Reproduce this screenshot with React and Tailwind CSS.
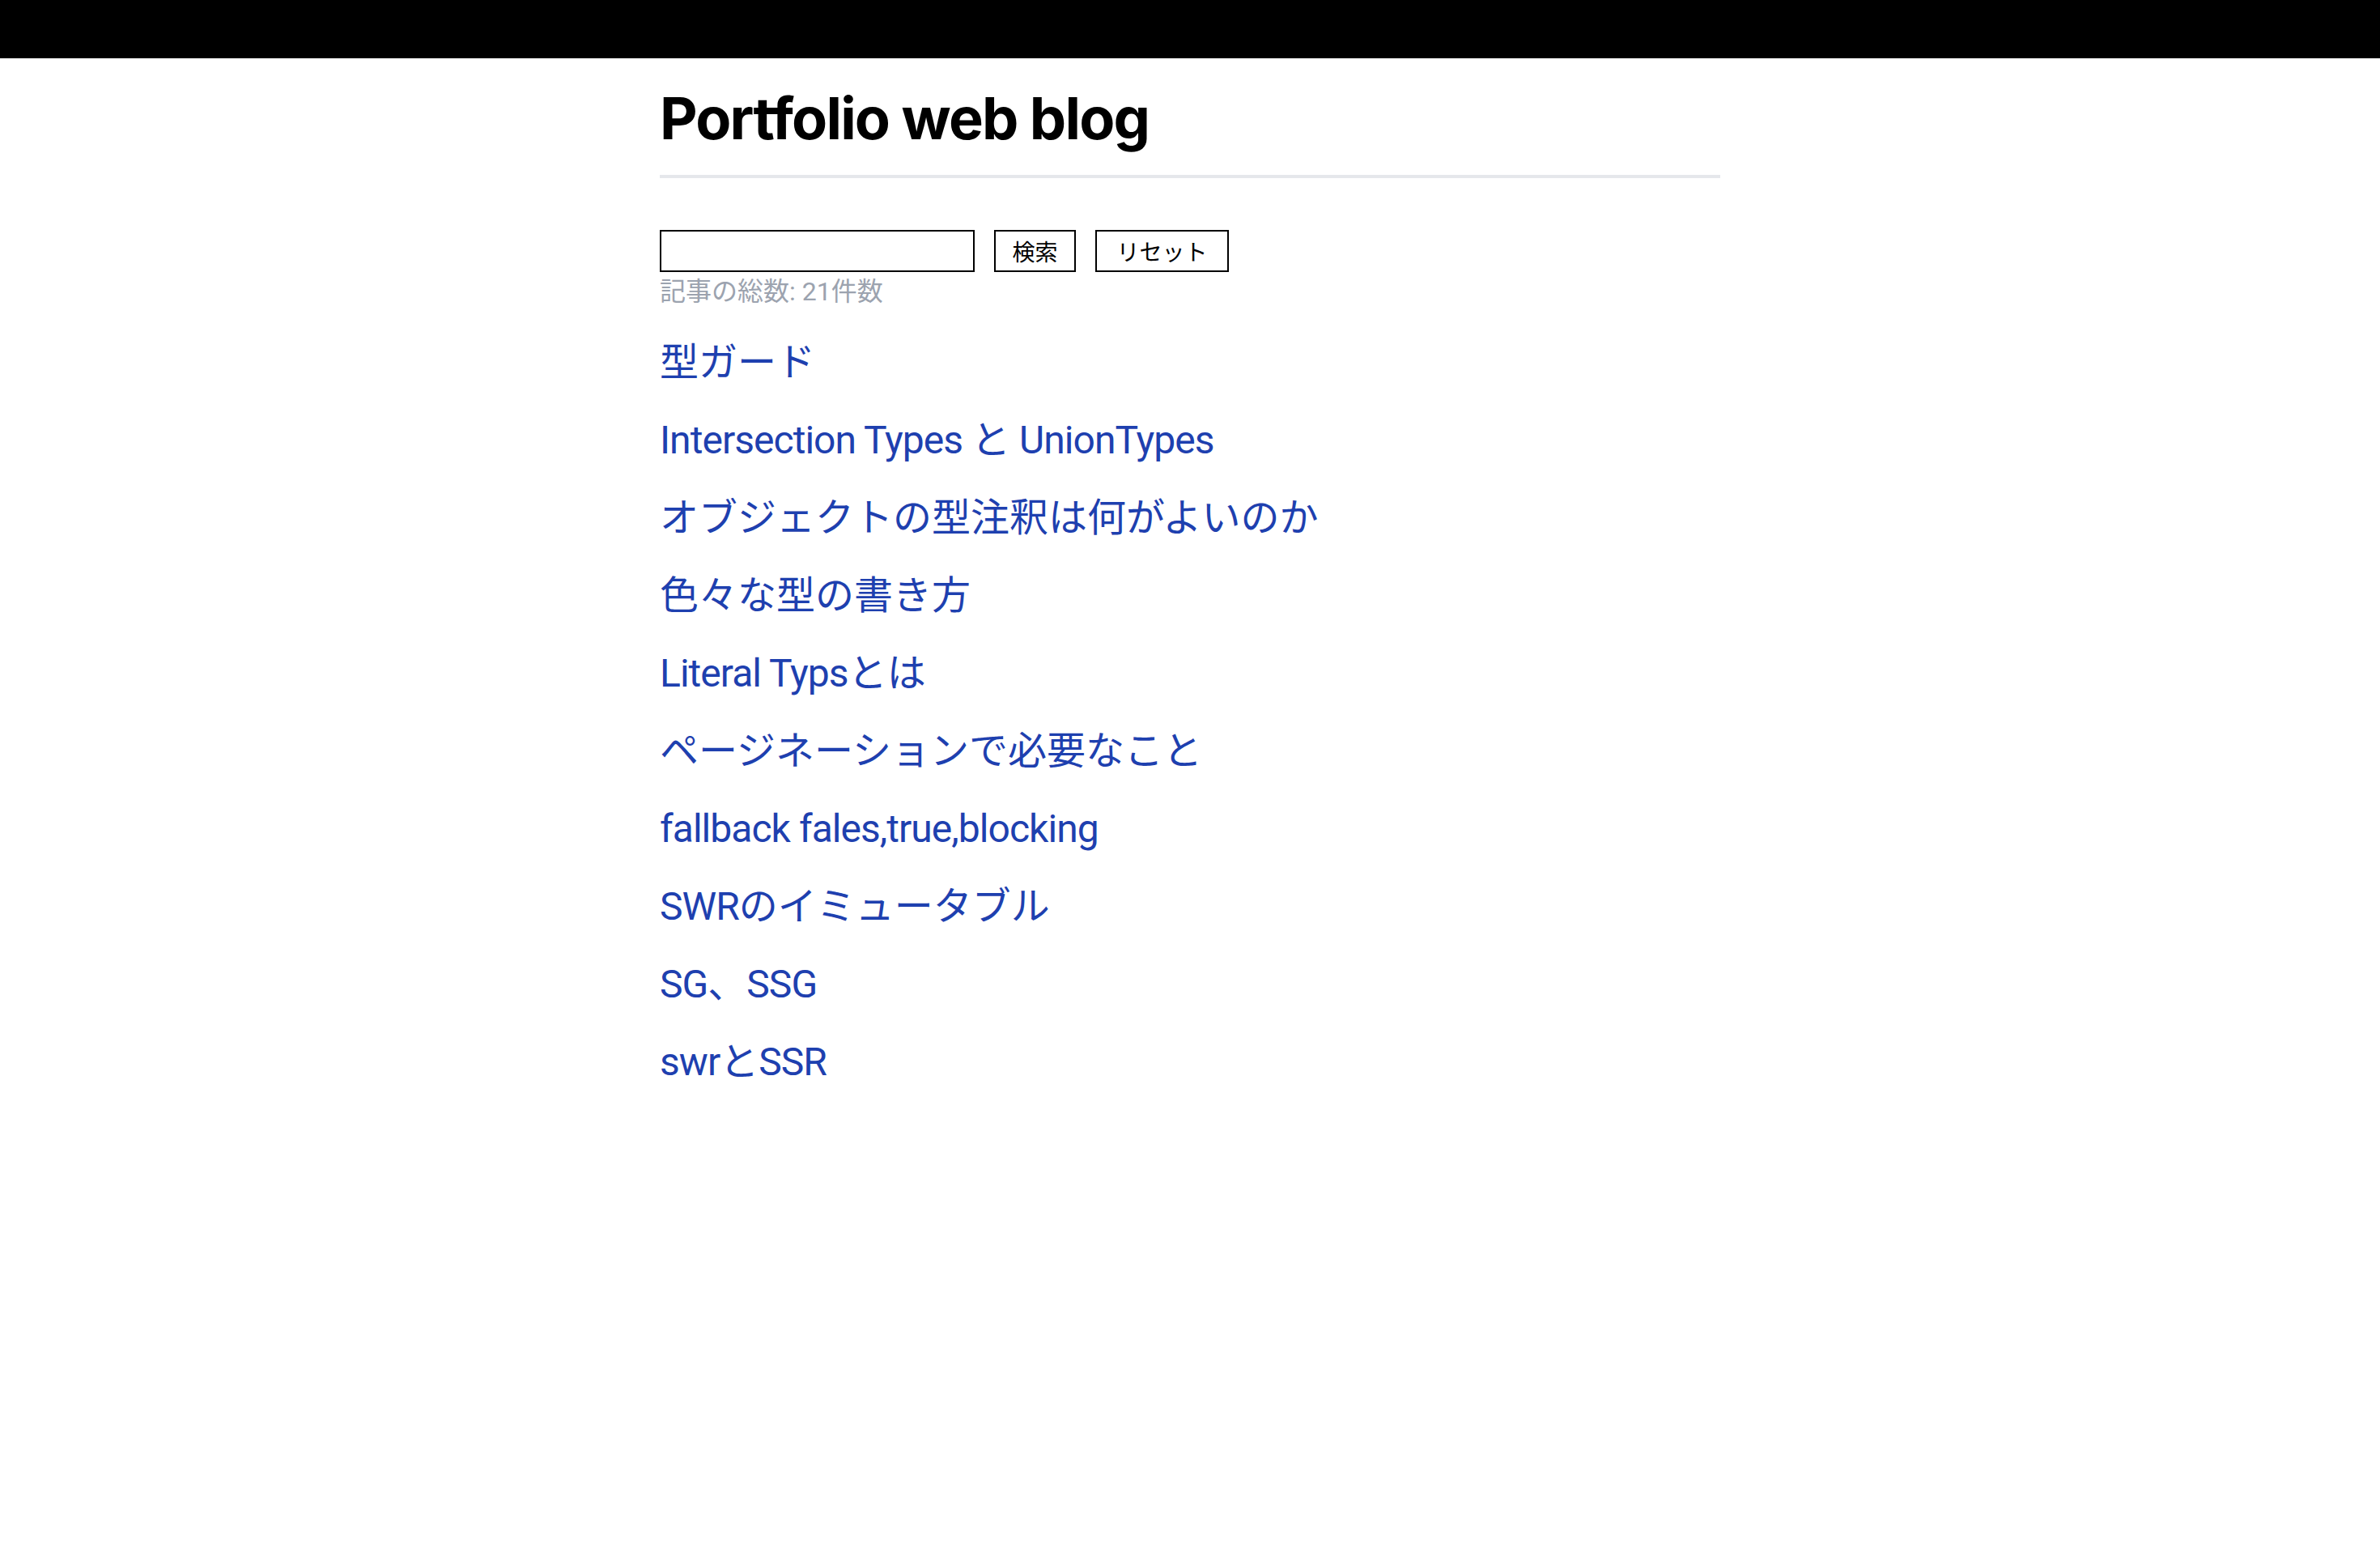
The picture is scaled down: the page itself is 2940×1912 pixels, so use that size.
import React from 'react';

const posts = [
  '型ガード',
  'Intersection Types と UnionTypes',
  'オブジェクトの型注釈は何がよいのか',
  '色々な型の書き方',
  'Literal Typsとは',
  'ページネーションで必要なこと',
  'fallback fales,true,blocking',
  'SWRのイミュータブル',
  'SG、SSG',
  'swrとSSR',
];

// latin runs are set a bit tighter than the kana/kanji
function Title({ text }) {
  return text.split(/([\x20-\x7E]+)/).filter(Boolean).map((part, i) =>
    /^[\x20-\x7E]+$/.test(part) ? (
      <span key={i} className="tracking-[-0.02em]">{part}</span>
    ) : (
      <span key={i}>{part}</span>
    )
  );
}

export default function App() {
  return (
    <div className="min-h-screen bg-white font-['Inter','Noto_Sans_CJK_JP',sans-serif]">
      <header className="h-[72px] bg-black" />
      <main className="w-[1310px] mx-auto">
        <h1 className="mt-[38px] pb-[34px] border-b-4 border-[#e5e7eb] text-[72px] leading-[72px] font-bold text-black tracking-tight">
          Portfolio web blog
        </h1>

        <form className="mt-[64px]" onSubmit={(e) => e.preventDefault()}>
          <div className="flex items-center gap-[24px]">
            <input
              type="text"
              className="w-[389px] h-[52px] border-2 border-black bg-white px-2 text-[26px] outline-none"
            />
            <button
              type="submit"
              className="w-[101px] h-[52px] border-2 border-black bg-white text-[28px] text-black font-['Noto_Sans_CJK_JP',sans-serif]"
            >
              検索
            </button>
            <button
              type="button"
              className="w-[165px] h-[52px] border-2 border-black bg-white text-[28px] text-black font-['Noto_Sans_CJK_JP',sans-serif]"
            >
              リセット
            </button>
          </div>
          <p className="text-[32px] leading-[48px] text-[#9ca3af] font-['Roboto','Noto_Sans_CJK_JP',sans-serif]">
            記事の総数: 21件数
          </p>
        </form>

        <ul className="mt-[32px] flex flex-col gap-[32px] font-['Roboto','Noto_Sans_CJK_JP',sans-serif]">
          {posts.map((title) => (
            <li key={title}>
              <a href="#" className="text-[48px] leading-[64px] text-[#1e40af]">
                <Title text={title} />
              </a>
            </li>
          ))}
        </ul>
      </main>
    </div>
  );
}
